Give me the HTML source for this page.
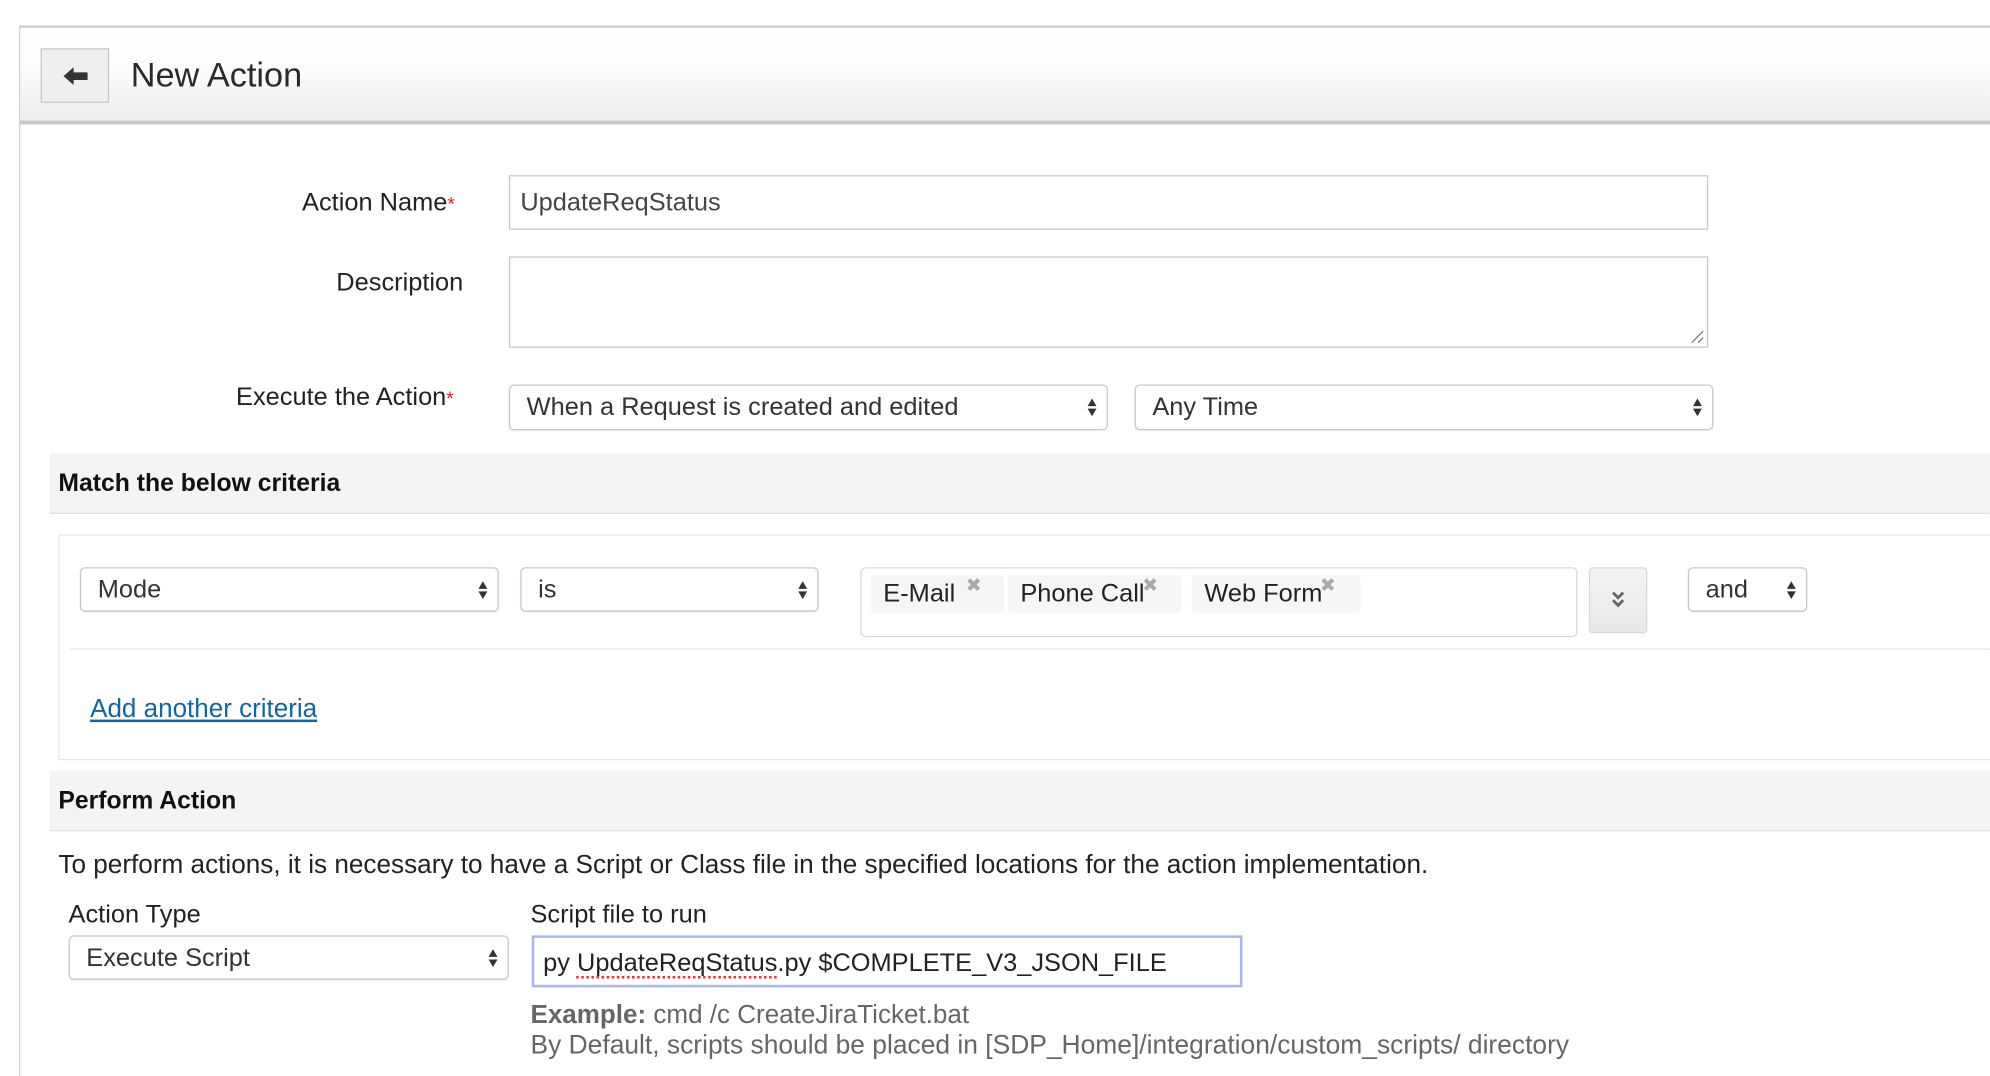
<!DOCTYPE html>
<html><head><meta charset="utf-8"><style>
html,body{margin:0;padding:0;background:#fff;width:1990px;height:1074px;overflow:hidden}
#w{position:absolute;left:0;top:0;width:1568px;height:846px;transform:scale(1.2691);transform-origin:0 0;font-family:"Liberation Sans",sans-serif;color:#333}
.a{position:absolute}
.t{position:absolute;font-size:20px;white-space:nowrap;line-height:1}
.box{position:absolute;border:1px solid #ccc;background:#fff;box-sizing:border-box}
.sel{position:absolute;border:1px solid #c8c8c8;border-radius:4px;background:#fff;box-sizing:border-box;font-size:20px;line-height:1;padding-left:13px;display:flex;align-items:center;box-shadow:0 1px 1px rgba(0,0,0,.06)}
.arr{position:absolute;right:7px;top:50%;margin-top:-9px;width:9px;height:18px}
.sec{position:absolute;left:39px;right:0;background:#f4f4f4;border-bottom:1px solid #e2e2e2}
.sec span{position:absolute;left:7px;font-weight:bold;font-size:19.5px;color:#111}
.tag{position:absolute;top:5px;height:30px;background:#f6f6f6;border-radius:3px;font-size:20px;line-height:30px;padding-left:10px;color:#222}
.tag i{position:absolute;top:-6px;font-style:normal;font-size:15px;color:#aaa}
.req{color:#e0221f;font-size:15px}
</style></head><body><div id="w">
<div class="a" style="left:15px;top:20px;width:1553px;height:826px;border-left:1px solid #d0d0d0;border-top:2px solid #cfcfcf"></div>
<div class="a" style="left:16px;top:22px;width:1552px;height:73px;background:linear-gradient(#fff 0%,#fdfdfd 40%,#eeeeee 100%);border-bottom:3px solid #c9c9c9"></div>
<div class="a" style="left:32px;top:38px;width:54px;height:43px;box-sizing:border-box;border:1px solid #c8c8c8;background:#efefef"></div>
<svg class="a" style="left:49px;top:52px" width="22" height="16" viewBox="0 0 22 16"><path d="M1 8 L9 1 L9 5 L20 5 L20 11 L9 11 L9 15 Z" fill="#333"/></svg>
<div class="t" style="left:103px;top:46px;font-size:27px;color:#2a2a2a">New Action</div>

<div class="t" style="left:238px;top:150px;color:#222">Action Name<span class="req">*</span></div>
<div class="box" style="left:401px;top:138px;width:945px;height:43px;border-color:#c8c8c8"></div>
<div class="t" style="left:410px;top:150px;color:#444">UpdateReqStatus</div>

<div class="t" style="left:265px;top:213px;color:#222">Description</div>
<div class="box" style="left:401px;top:202px;width:945px;height:72px;border-color:#c8c8c8"></div>
<svg class="a" style="left:1331px;top:259px" width="12" height="12"><path d="M11 2 L2 11 M11 7 L7 11" stroke="#777" stroke-width="1"/></svg>

<div class="t" style="left:186px;top:303px;color:#222">Execute the Action<span class="req">*</span></div>
<div class="sel" style="left:401px;top:303px;width:472px;height:36px">When a Request is created and edited<svg class="arr" viewBox="0 0 9 18"><path d="M4.5 2 L8 8 L1 8Z M4.5 16 L8 10 L1 10Z" fill="#333"/></svg></div>
<div class="sel" style="left:894px;top:303px;width:456px;height:36px">Any Time<svg class="arr" viewBox="0 0 9 18"><path d="M4.5 2 L8 8 L1 8Z M4.5 16 L8 10 L1 10Z" fill="#333"/></svg></div>

<div class="sec" style="top:357px;height:47px"><span style="top:13px">Match the below criteria</span></div>
<div class="a" style="left:46px;top:421px;width:1530px;height:178px;box-sizing:border-box;border:1px solid #e6e6e6"></div>
<div class="sel" style="left:63px;top:447px;width:330px;height:35px">Mode<svg class="arr" viewBox="0 0 9 18"><path d="M4.5 2 L8 8 L1 8Z M4.5 16 L8 10 L1 10Z" fill="#333"/></svg></div>
<div class="sel" style="left:410px;top:447px;width:235px;height:35px">is<svg class="arr" viewBox="0 0 9 18"><path d="M4.5 2 L8 8 L1 8Z M4.5 16 L8 10 L1 10Z" fill="#333"/></svg></div>
<div class="a" style="left:678px;top:447px;width:565px;height:55px;box-sizing:border-box;border:1px solid #d8d8d8;border-radius:4px;background:#fff">
<div class="tag" style="left:7px;width:95px">E-Mail<i style="left:75px">✖</i></div>
<div class="tag" style="left:115px;width:127px">Phone Call<i style="left:106px">✖</i></div>
<div class="tag" style="left:260px;width:123px">Web Form<i style="left:101px">✖</i></div>
</div>
<div class="a" style="left:1252px;top:447px;width:46px;height:52px;box-sizing:border-box;border:1px solid #d8d8d8;border-radius:3px;background:linear-gradient(#f4f4f4,#e8e8e8)"></div>
<svg class="a" style="left:1269px;top:464px" width="12" height="16" viewBox="0 0 12 16"><path d="M2 3 L6 7 L10 3 M2 9 L6 13 L10 9" stroke="#666" stroke-width="2.2" fill="none"/></svg>
<div class="sel" style="left:1330px;top:447px;width:94px;height:35px">and<svg class="arr" viewBox="0 0 9 18"><path d="M4.5 2 L8 8 L1 8Z M4.5 16 L8 10 L1 10Z" fill="#333"/></svg></div>
<div class="a" style="left:55px;top:511px;width:1513px;height:1px;background:#e6e6e6"></div>
<div class="t" style="left:71px;top:549px;color:#15649f;text-decoration:underline;font-size:20.5px">Add another criteria</div>

<div class="sec" style="top:607px;height:47px"><span style="top:13px">Perform Action</span></div>
<div class="t" style="left:46px;top:672px;color:#222;font-size:20.6px">To perform actions, it is necessary to have a Script or Class file in the specified locations for the action implementation.</div>

<div class="t" style="left:54px;top:711px;color:#222">Action Type</div>
<div class="sel" style="left:54px;top:737px;width:347px;height:35px">Execute Script<svg class="arr" viewBox="0 0 9 18"><path d="M4.5 2 L8 8 L1 8Z M4.5 16 L8 10 L1 10Z" fill="#333"/></svg></div>
<div class="t" style="left:418px;top:711px;color:#222">Script file to run</div>
<div class="a" style="left:419px;top:737px;width:560px;height:41px;box-sizing:border-box;border:2px solid #a9b9ef;background:#fff"></div>
<div class="t" style="left:428px;top:749px;color:#222">py <span style="text-decoration:underline dotted #e33 2px;text-underline-offset:4px">UpdateReqStatus</span>.py $COMPLETE_V3_JSON_FILE</div>
<div class="t" style="left:418px;top:790px;color:#666;font-size:20.5px"><b>Example:</b> cmd /c CreateJiraTicket.bat</div>
<div class="t" style="left:418px;top:814px;color:#666;font-size:20.8px">By Default, scripts should be placed in [SDP_Home]/integration/custom_scripts/ directory</div>
</div></body></html>
